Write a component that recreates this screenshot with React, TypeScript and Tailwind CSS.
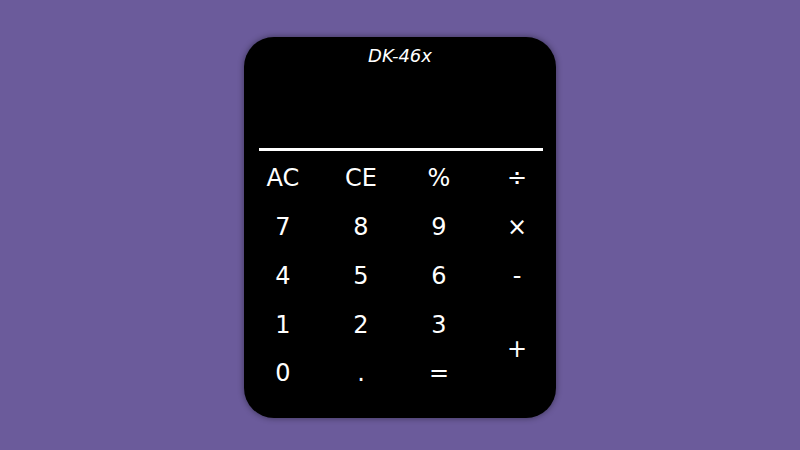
const keys: { label: string; span?: boolean }[] = [
  { label: 'AC' },
  { label: 'CE' },
  { label: '%' },
  { label: '÷' },
  { label: '7' },
  { label: '8' },
  { label: '9' },
  { label: '×' },
  { label: '4' },
  { label: '5' },
  { label: '6' },
  { label: '-' },
  { label: '1' },
  { label: '2' },
  { label: '3' },
  { label: '+', span: true },
  { label: '0' },
  { label: '.' },
  { label: '=' },
];

export default function App() {
  return (
    <div
      className="w-full h-[450px] bg-[#6b5b9b] pt-[37px]"
      style={{ fontFamily: '"DejaVu Sans", Verdana, sans-serif' }}
    >
      <div className="mx-auto w-[312px] h-[381px] bg-black rounded-[30px] shadow-[0_0_6px_rgba(0,0,0,0.45)] pt-[6px] text-white">
        <div className="h-[24px] flex items-center justify-center text-[18px] italic">
          DK-46x
        </div>
        <div className="h-[81px]" />
        <div className="ml-[15px] w-[284px] h-[3px] bg-white" />
        <div className="mt-[3px] grid grid-cols-4 grid-rows-[repeat(5,48.75px)]">
          {keys.map((k) => (
            <button
              key={k.label}
              className={`flex items-center justify-center text-[24px] ${
                k.span ? 'row-span-2' : ''
              }`}
            >
              {k.label}
            </button>
          ))}
        </div>
      </div>
    </div>
  );
}
